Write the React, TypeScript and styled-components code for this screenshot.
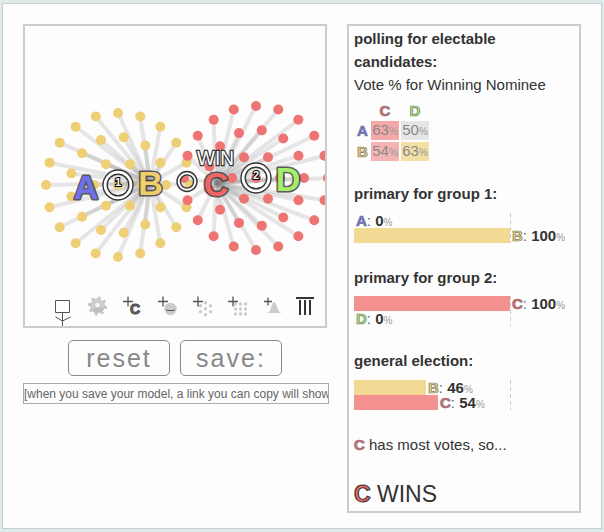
import React from "react";
import styled, { createGlobalStyle } from "styled-components";

const YELLOW = "#efcf75";
const RED = "#ee7373";
const tones: Record<string, string> = { A: "#6f6ff0", B: "#efcf6a", C: "#f06464", D: "#a5ee6a" };

const Global = createGlobalStyle`
  * { box-sizing: border-box; }
  body { margin: 0; background: #deebeb; font-family: "Liberation Sans", Arial, sans-serif; color: #333; }
`;
const Page = styled.div`
  height: 532px;
  padding: 3px 2px;
`;
const Card = styled.main`
  display: flex;
  align-items: flex-start;
  width: 600px;
  height: 526px;
  padding: 20px 0 0 20px;
  background: #fdfdfd;
  border: 1px solid #ccc;
`;
const Left = styled.section`
  width: 306px;
  margin-right: 18px;
`;
const Arena = styled.div`
  width: 304px;
  height: 304px;
  border: 2px solid #ccc;
  svg { display: block; }
`;
const Buttons = styled.div`
  display: flex;
  gap: 10px;
  margin: 12px 0 7px 45px;
`;
const Button = styled.button`
  width: 102px;
  height: 36px;
  padding: 0;
  font: 25px/34px "Liberation Sans", Arial, sans-serif;
  letter-spacing: 2px;
  color: #888;
  background: #fdfdfd;
  border: 1px solid #888;
  border-radius: 5px;
`;
const LinkField = styled.div`
  height: 21px;
  overflow: hidden;
  white-space: nowrap;
  font-size: 12px;
  line-height: 20px;
  color: #666;
  border: 1px solid #aaa;
`;
const Results = styled.section`
  width: 234px;
  height: 489px;
  padding: 1px 5px;
  border: 2px solid #ccc;
  font-size: 15px;
  line-height: 23px;
`;
const Heading = styled.div`
  font-weight: bold;
`;
const Letter = styled.b<{ $name: string; $large?: boolean }>`
  color: ${(p) => tones[p.$name]};
  -webkit-text-stroke: ${(p) => (p.$large ? "1.1px #333" : "0.7px #777")};
`;
const Grid = styled.div`
  display: grid;
  grid-template-columns: 13px 28px 28px;
  grid-template-rows: 18px 19px 19px;
  gap: 2px;
  margin: 5px 0 0 2px;
  text-align: center;
  line-height: 19px;
`;
const Cell = styled.div<{ $bg: string }>`
  background: ${(p) => p.$bg};
  color: #888;
  line-height: 17px;
`;
const Unit = styled.span`
  font-size: 10px;
  color: #999;
`;
const Chart = styled.div`
  width: 157px;
  height: 30px;
  background: repeating-linear-gradient(#ccc 0 4px, transparent 4px 7px) right / 1px 100% no-repeat;
`;
const Row = styled.div`
  display: flex;
  height: 15px;
  line-height: 15px;
  white-space: nowrap;
`;
const Bar = styled.div<{ $w: number; $bg: string }>`
  flex: none;
  width: ${(p) => p.$w}px;
  margin-right: 2px;
  background: ${(p) => p.$bg};
`;
const Value = styled.span`
  height: 15px;
  color: #666;
`;
const Amount = styled.strong`
  color: #333;
`;
const Poll = styled.div<{ $top: number; $gap?: number }>`
  margin-top: ${(p) => p.$top}px;
  ${Heading} { margin-bottom: ${(p) => p.$gap ?? 8}px; }
`;
const Note = styled.div`
  margin-top: 23px;
`;
const Winner = styled.div`
  margin-top: 25px;
  font-size: 23px;
  line-height: 26px;
`;

function Result({ name, value, width, bg }: { name: string; value: number; width: number; bg: string }) {
  return (
    <Row>
      <Bar $w={width} $bg={bg} />
      <Value><Letter $name={name}>{name}</Letter>: <Amount>{value}</Amount><Unit>%</Unit></Value>
    </Row>
  );
}

const rings: [number, number][] = [[0, 1], [24, 6], [48, 13], [72, 20]];
function Crowd({ cx, cy, tx, ty, fill }: { cx: number; cy: number; tx: number; ty: number; fill: string }) {
  const pts = rings.flatMap(([r, n]) =>
    Array.from({ length: n }, (_, i) => {
      const a = (i * 2 * Math.PI) / n;
      return [cx + r * Math.cos(a), cy + r * Math.sin(a)];
    })
  );
  return (
    <g>
      {pts.map(([x, y], i) => <line key={"l" + i} x1={x} y1={y} x2={tx} y2={ty} stroke="#808080" strokeOpacity=".19" strokeWidth="4" />)}
      {pts.map(([x, y], i) => <circle key={i} cx={x} cy={y} r="5" fill={fill} />)}
    </g>
  );
}
function Candidate({ name, x, y }: { name: string; x: number; y: number }) {
  return (
    <text
      x={x} y={y} textAnchor="middle" fontSize="34" fontWeight="bold" strokeLinejoin="round"
      fill={tones[name]} stroke="#333" strokeOpacity=".8" strokeWidth="3.2" paintOrder="stroke"
    >{name}</text>
  );
}
function Ring({ x, y, r, inner }: { x: number; y: number; r: number; inner: number }) {
  return (
    <g fill="none">
      <circle cx={x} cy={y} r={(r + inner) / 2} stroke="#333" strokeWidth={r - inner + 1.4} />
      <circle cx={x} cy={y} r={(r + inner) / 2} stroke="#fff" strokeWidth={r - inner - 1.4} />
    </g>
  );
}
function RingNumber({ x, y, children }: { x: number; y: number; children: string }) {
  return <text x={x} y={y} textAnchor="middle" fontSize="11" fontWeight="bold" fill="#fff" stroke="#000" strokeWidth="2" paintOrder="stroke">{children}</text>;
}
const Plus = ({ x, y = 301.5, arm = 5 }: { x: number; y?: number; arm?: number }) => (
  <path d={`M${x - arm} ${y}h${arm * 2}M${x} ${y - arm}v${arm * 2}`} stroke="#555" strokeWidth="1.3" />
);
const dots7 = [[0, 0], [-5, -3], [5, -3], [-5, 3], [5, 3], [0, -6], [0, 6]];
const dots9 = [-5, 0, 5].flatMap((x) => [-5, 0, 5].map((y) => [x, y]));

function Model() {
  return (
    <svg width="300" height="300" viewBox="25 26 300 300" fontFamily="Liberation Sans, Arial, sans-serif">
      <Crowd cx={118} cy={185} tx={150} ty={183} fill={YELLOW} />
      <Crowd cx={256} cy={178} tx={216} ty={183} fill={RED} />
      <Candidate name="A" x={86} y={198.5} />
      <Ring x={118} y={185} r={15} inner={10.8} />
      <RingNumber x={118} y={185.5}>1</RingNumber>
      <Candidate name="B" x={150.5} y={194.5} />
      <Ring x={187} y={181.5} r={10} inner={6.6} />
      <Candidate name="C" x={216} y={195.5} />
      <Ring x={256} y={178} r={15} inner={10.8} />
      <RingNumber x={256} y={178.5}>2</RingNumber>
      <Candidate name="D" x={288} y={190.5} />
      <text x="215.5" y="165" textAnchor="middle" fontSize="20" textLength="37" lengthAdjust="spacingAndGlyphs" fill="#fff" stroke="#333" strokeWidth="2.6" paintOrder="stroke">WIN</text>
      <path d="M55.5 300.5h14v12h-14zM62.500 312.500v14M62.500 321l-7-4M62.500 321l8-4" fill="none" stroke="#555" />
      <g transform="translate(97.500 306)">
        <circle r="8" fill="none" stroke="#c4c4c4" strokeWidth="3" strokeDasharray="2.600 3.680" />
        <circle r="7" fill="#d2d2d2" stroke="#bbb" strokeWidth=".8" />
        <path d="M-5 4A6.500 6.500 0 0 0 6 2L2 1L-3 2Z" fill="#bdbdbd" />
        <circle cy="-1" r="3" fill="#f5f5f5" stroke="#aaa" strokeWidth=".7" />
      </g>
      <Plus x={128} />
      <text x="135" y="313.5" textAnchor="middle" fontSize="14" fontWeight="bold" fill="#777" stroke="#444" strokeWidth="1">C</text>
      <circle cx="170.500" cy="309" r="6.200" fill="#ccc" />
      <path d="M166 309.500q1 1 2 1h5q1 0 2-1" fill="none" stroke="#555" />
      <Plus x={163} />
      {dots7.map(([x, y], i) => <circle key={i} cx={205.500 + x} cy={308.800 + y} r="1.700" fill="#ccc" />)}
      <Plus x={198} />
      {dots9.map(([x, y], i) => <circle key={i} cx={240.500 + x} cy={309 + y} r="1.700" fill="#ccc" />)}
      <Plus x={233} />
      <path d="M267 313q3-1 4-5q1.500-6 3-6q2 0 3.500 6q1 4 4 5z" fill="#ccc" />
      <Plus x={268} arm={4} />
      <path d="M296 298h18" stroke="#333" strokeWidth="2" />
      <path d="M300 300v15M305 300v15M310 300v15" stroke="#333" strokeWidth="2" />
    </svg>
  );
}

export default function App() {
  return (
    <Page>
      <Global />
      <Card>
        <Left>
          <Arena><Model /></Arena>
          <Buttons><Button>reset</Button><Button>save:</Button></Buttons>
          <LinkField>[when you save your model, a link you can copy will show up here]</LinkField>
        </Left>
        <Results>
          <Heading>polling for electable candidates:</Heading>
          <div>Vote % for Winning Nominee</div>
          <Grid>
            <span /><Letter $name="C">C</Letter><Letter $name="D">D</Letter>
            <Letter $name="A">A</Letter><Cell $bg="#f4a8a8">63<Unit>%</Unit></Cell><Cell $bg="#e6e6e6">50<Unit>%</Unit></Cell>
            <Letter $name="B">B</Letter><Cell $bg="#f5b4b4">54<Unit>%</Unit></Cell><Cell $bg="#f4dfa5">63<Unit>%</Unit></Cell>
          </Grid>
          <Poll $top={21}>
            <Heading>primary for group 1:</Heading>
            <Chart>
              <Result name="A" value={0} width={0} bg="#8888f0" />
              <Result name="B" value={100} width={156} bg="#f2da94" />
            </Chart>
          </Poll>
          <Poll $top={23} $gap={7}>
            <Heading>primary for group 2:</Heading>
            <Chart>
              <Result name="C" value={100} width={156} bg="#f39191" />
              <Result name="D" value={0} width={0} bg="#b0ee80" />
            </Chart>
          </Poll>
          <Poll $top={23}>
            <Heading>general election:</Heading>
            <Chart>
              <Result name="B" value={46} width={72} bg="#f2da94" />
              <Result name="C" value={54} width={84} bg="#f39191" />
            </Chart>
          </Poll>
          <Note><Letter $name="C">C</Letter> has most votes, so...</Note>
          <Winner><Letter $name="C" $large>C</Letter> WINS</Winner>
        </Results>
      </Card>
    </Page>
  );
}
